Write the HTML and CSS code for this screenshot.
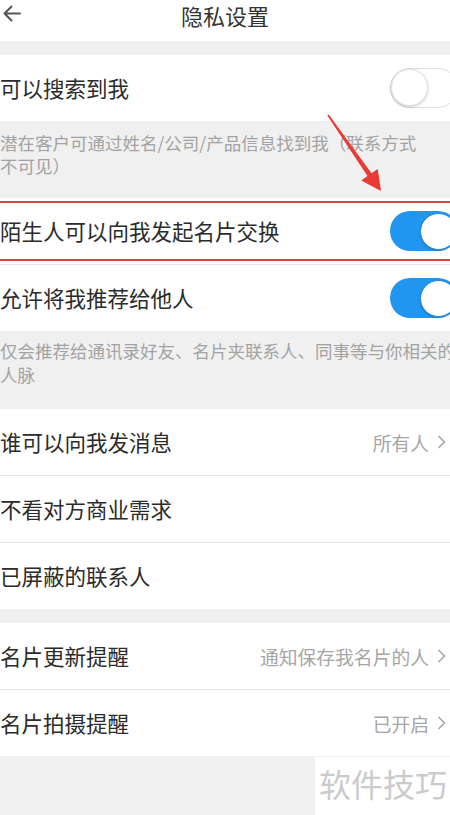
FILE: index.html
```html
<!DOCTYPE html>
<html lang="zh-CN">
<head>
<meta charset="utf-8">
<title>隐私设置</title>
<link rel="stylesheet" href="styles.css">
</head>
<body>
<div class="page">
  <header class="header">
    <svg class="back" width="20" height="20" viewBox="0 0 20 20"><path d="M18 10.5H2.5M9.5 3.5L2.5 10.5L9.5 17.5" fill="none" stroke="#555" stroke-width="2" stroke-linecap="round" stroke-linejoin="round"/></svg>
    <h1 class="title">隐私设置</h1>
  </header>

  <div class="gap"></div>

  <div class="row">
    <span class="label">可以搜索到我</span>
    <span class="toggle off"><span class="thumb"></span></span>
  </div>
  <div class="desc">潜在客户可通过姓名/公司/产品信息找到我（联系方式<br>不可见）</div>

  <div class="row highlighted">
    <span class="label">陌生人可以向我发起名片交换</span>
    <span class="toggle on"><span class="thumb"></span></span>
  </div>
  <div class="divider"></div>
  <div class="row">
    <span class="label">允许将我推荐给他人</span>
    <span class="toggle on"><span class="thumb"></span></span>
  </div>
  <div class="desc desc2">仅会推荐给通讯录好友、名片夹联系人、同事等与你相关的<br>人脉</div>

  <div class="row">
    <span class="label">谁可以向我发消息</span>
    <span class="value">所有人<svg class="chev" width="10" height="14" viewBox="0 0 10 14"><path d="M2 1.5L7.5 7L2 12.5" fill="none" stroke="#a8a8a8" stroke-width="1.7" stroke-linecap="round" stroke-linejoin="round"/></svg></span>
  </div>
  <div class="divider"></div>
  <div class="row">
    <span class="label">不看对方商业需求</span>
  </div>
  <div class="divider"></div>
  <div class="row">
    <span class="label">已屏蔽的联系人</span>
  </div>

  <div class="gap"></div>

  <div class="row">
    <span class="label">名片更新提醒</span>
    <span class="value">通知保存我名片的人<svg class="chev" width="10" height="14" viewBox="0 0 10 14"><path d="M2 1.5L7.5 7L2 12.5" fill="none" stroke="#a8a8a8" stroke-width="1.7" stroke-linecap="round" stroke-linejoin="round"/></svg></span>
  </div>
  <div class="divider"></div>
  <div class="row">
    <span class="label">名片拍摄提醒</span>
    <span class="value">已开启<svg class="chev" width="10" height="14" viewBox="0 0 10 14"><path d="M2 1.5L7.5 7L2 12.5" fill="none" stroke="#a8a8a8" stroke-width="1.7" stroke-linecap="round" stroke-linejoin="round"/></svg></span>
  </div>

  <svg class="arrow" width="450" height="815" viewBox="0 0 450 815"><polygon points="328.7,114.4 371.5,173.3 377.7,168.9 381,191 361.3,180.5 367.5,176.1 327.3,115.4" fill="#e93a35"/></svg>
  <div class="watermark">软件技巧</div>
</div>
</body>
</html>
```

FILE: styles.css
```css
* { box-sizing: border-box; margin: 0; padding: 0; }
html, body {
  width: 450px;
  height: 815px;
  overflow: hidden;
  background: #f0f0f0;
}
body {
  font-family: "Noto Sans CJK SC", "Noto Sans", sans-serif;
  color: #2b2b2b;
}
.page {
  position: relative;
  width: 450px;
  height: 815px;
  overflow: hidden;
  background: #f0f0f0;
}
.header {
  height: 41px;
  background: #fff;
  position: relative;
  display: flex;
  justify-content: center;
  align-items: flex-start;
}
.back {
  position: absolute;
  left: 2px;
  top: 3px;
}
.title {
  font-size: 22px;
  font-weight: 400;
  line-height: 30px;
  color: #333;
}
.gap {
  height: 14px;
}
.row {
  height: 66px;
  background: #fff;
  display: flex;
  align-items: center;
  justify-content: space-between;
  padding-right: 3px;
  position: relative;
}
.label {
  font-size: 21.5px;
  line-height: 30px;
  white-space: nowrap;
  color: #2b2b2b;
}
.value {
  display: flex;
  align-items: center;
  gap: 8px;
  font-size: 18.8px;
  color: #a6a6a6;
  white-space: nowrap;
}
.chev {
  display: block;
}
.divider {
  height: 1px;
  background: #e6e6e6;
}
.desc {
  height: 77px;
  padding-top: 10px;
  font-size: 17.5px;
  line-height: 23px;
  color: #a3a3a3;
  white-space: nowrap;
}
.desc2 {
  height: 78px;
  padding-top: 8px;
  line-height: 24px;
}
.toggle {
  width: 68px;
  height: 40px;
  border-radius: 20px;
  margin-right: -11px;
  position: relative;
  flex: none;
}
.toggle.off {
  background: #fff;
  border: 1px solid #dedede;
  box-shadow: inset 0 0 1px rgba(0,0,0,0.05);
}
.toggle.on {
  background: #2196f0;
}
.thumb {
  position: absolute;
  top: 1px;
  width: 37px;
  height: 37px;
  border-radius: 50%;
  background: #fff;
}
.toggle.off .thumb {
  left: 0;
  top: 0;
  border: 1px solid #e2e2e2;
  box-shadow: 0 1px 3px rgba(0,0,0,0.22);
}
.toggle.on .thumb {
  right: 1px;
  top: 1.5px;
  border: 1px solid #1b84d6;
  box-shadow: 0 1px 2px rgba(0,0,0,0.2);
}
.highlighted::after {
  content: "";
  position: absolute;
  left: -10px;
  right: -10px;
  top: 3px;
  bottom: 3px;
  border: 2.5px solid #d9434a;
  pointer-events: none;
}
.arrow {
  position: absolute;
  left: 0;
  top: 0;
  pointer-events: none;
}
.watermark {
  position: absolute;
  left: 315px;
  top: 757px;
  width: 135px;
  height: 58px;
  background: #fff;
  font-size: 32px;
  line-height: 52px;
  color: #cbcbcb;
  padding-left: 4px;
  white-space: nowrap;
}
```
